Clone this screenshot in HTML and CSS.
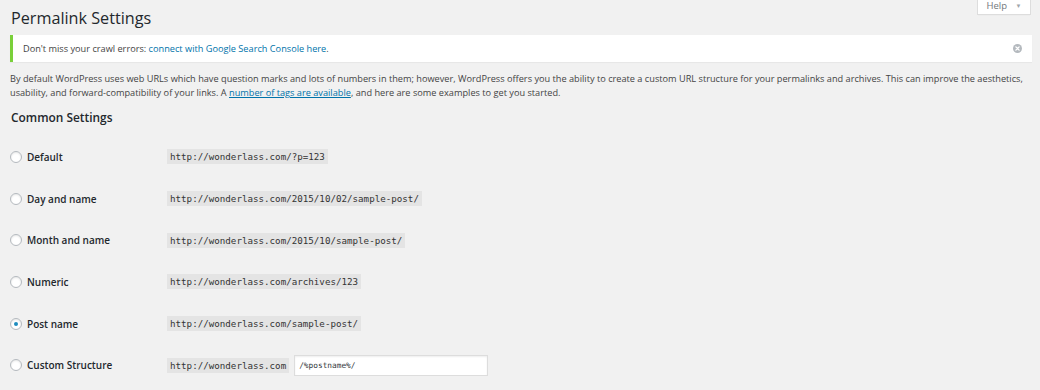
FILE: index.html
```html
<!DOCTYPE html>
<html lang="en">
<head>
    <meta charset="UTF-8">
    <title>Permalink Settings</title>
    <link rel="stylesheet" href="styles.css">
</head>
<body>
    <div class="wrap">
        <div class="page-header">
            <h1>Permalink Settings</h1>
            <button class="help-tab">Help <span class="arrow">&#9660;</span></button>
        </div>

        <!-- Search console notice -->
        <div class="notice">
            <p>Don't miss your crawl errors: <a href="#">connect with Google Search Console here</a>.</p>
            <button class="dismiss" aria-label="Dismiss">
                <svg width="9" height="9" viewBox="0 0 10 10">
                    <circle cx="5" cy="5" r="5" fill="#b4b9be"/>
                    <path d="M3.2 3.2 L6.8 6.8 M6.8 3.2 L3.2 6.8" stroke="#fff" stroke-width="1.5" stroke-linecap="round"/>
                </svg>
            </button>
        </div>

        <p class="intro">By default WordPress uses web URLs which have question marks and lots of numbers in them; however, WordPress offers you the ability to create a custom URL structure for your permalinks and archives. This can improve the aesthetics, usability, and forward-compatibility of your links. A <a href="#">number of tags are available</a>, and here are some examples to get you started.</p>

        <h2>Common Settings</h2>

        <div class="settings">
            <div class="row">
                <label><input type="radio" name="structure"> Default</label>
                <div><code>http://wonderlass.com/?p=123</code></div>
            </div>
            <div class="row">
                <label><input type="radio" name="structure"> Day and name</label>
                <div><code>http://wonderlass.com/2015/10/02/sample-post/</code></div>
            </div>
            <div class="row">
                <label><input type="radio" name="structure"> Month and name</label>
                <div><code>http://wonderlass.com/2015/10/sample-post/</code></div>
            </div>
            <div class="row">
                <label><input type="radio" name="structure"> Numeric</label>
                <div><code>http://wonderlass.com/archives/123</code></div>
            </div>
            <div class="row">
                <label><input type="radio" name="structure" checked> Post name</label>
                <div><code>http://wonderlass.com/sample-post/</code></div>
            </div>
            <div class="row">
                <label><input type="radio" name="structure"> Custom Structure</label>
                <div class="custom">
                    <code>http://wonderlass.com</code>
                    <input type="text" class="structure-input" value="/%postname%/">
                </div>
            </div>
        </div>
    </div>
</body>
</html>
```

FILE: styles.css
```css
body {
    margin: 0;
    background-color: #f1f1f1;
    color: #444;
    font-family: "Open Sans", sans-serif;
    font-size: 9.2px;
    line-height: 14px;
}

.wrap {
    padding: 0 8px 0 10px;
}

/* Header */
.page-header {
    display: flex;
    justify-content: space-between;
    align-items: flex-start;
}

h1 {
    margin: 6px 0 0 1px;
    font-size: 16.2px;
    font-weight: 400;
    line-height: 24px;
    color: #23282d;
}

.help-tab {
    width: 54px;
    height: 15px;
    margin-right: 1px;
    padding: 0 0 2px;
    background-color: #fff;
    border: 1px solid #ddd;
    border-top: none;
    box-shadow: 0 1px 1px -1px rgba(0, 0, 0, 0.1);
    font-family: "Open Sans", sans-serif;
    font-size: 9.5px;
    line-height: 12px;
    color: #72777c;
}

.help-tab .arrow {
    margin-left: 6px;
    font-size: 6px;
    color: #a0a5aa;
    vertical-align: 1px;
}

/* Notice */
.notice {
    display: flex;
    justify-content: space-between;
    align-items: center;
    margin-top: 5px;
    padding: 0 10px 0 10px;
    background-color: #fff;
    border-left: 3px solid #7ad03a;
    box-shadow: 0 1px 1px rgba(0, 0, 0, 0.04);
}

.notice p {
    margin: 0;
    padding: 6.5px 0;
}

.notice a,
.intro a {
    color: #0073aa;
}

.notice a {
    text-decoration: none;
}

.dismiss {
    display: flex;
    padding: 0;
    background: none;
    border: none;
}

.intro {
    margin: 10px 0 0 0;
}

h2 {
    margin: 7.5px 0 0 1px;
    font-size: 11.9px;
    font-weight: 600;
    line-height: 18px;
    color: #23282d;
}

/* Permalink choices */
.settings {
    margin-top: 10.5px;
}

.row {
    display: grid;
    grid-template-columns: 157px 1fr;
    align-items: center;
    height: 41.7px;
}

.row label {
    display: flex;
    align-items: center;
    gap: 5px;
    font-size: 10px;
    font-weight: 600;
    color: #23282d;
}

.row input[type="radio"] {
    appearance: none;
    width: 12px;
    height: 12px;
    margin: 0;
    border: 1px solid #b4b9be;
    border-radius: 50%;
    background-color: #fff;
    box-shadow: inset 0 1px 2px rgba(0, 0, 0, 0.1);
    display: flex;
    justify-content: center;
    align-items: center;
}

.row input[type="radio"]:checked::before {
    content: "";
    width: 4px;
    height: 4px;
    border-radius: 50%;
    background-color: #1e8cbe;
}

code {
    display: inline-block;
    padding: 2px 3px;
    background-color: #e4e4e4;
    font-family: "DejaVu Sans Mono", monospace;
    font-size: 9.2px;
    line-height: 11px;
    color: #333;
}

.custom {
    display: flex;
    align-items: center;
    gap: 5px;
}

.structure-input {
    width: 194px;
    height: 21px;
    box-sizing: border-box;
    padding: 0 4px;
    background-color: #fff;
    border: 1px solid #ddd;
    box-shadow: inset 0 1px 2px rgba(0, 0, 0, 0.07);
    font-family: "DejaVu Sans Mono", monospace;
    font-size: 7.8px;
    color: #32373c;
}
```
